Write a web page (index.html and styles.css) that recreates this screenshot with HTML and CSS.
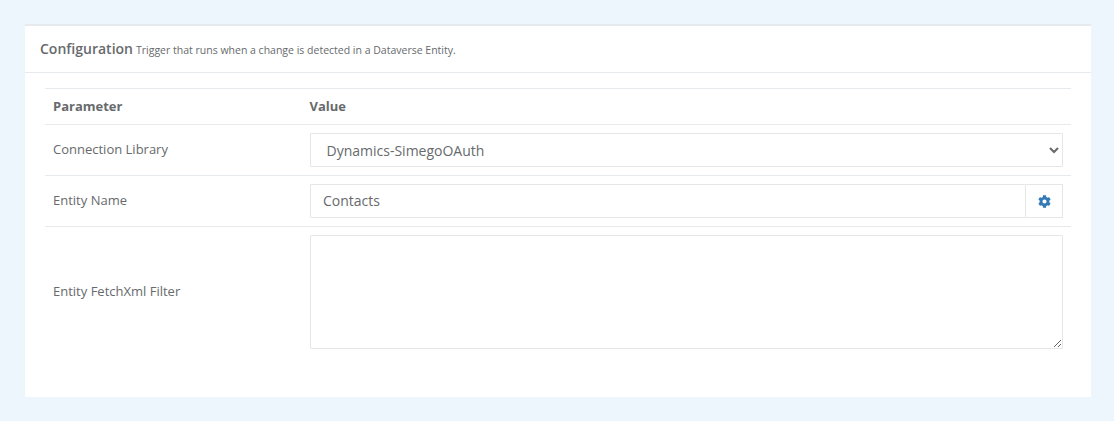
FILE: index.html
```html
<!DOCTYPE html>
<html lang="en">
<head>
<meta charset="utf-8">
<title>Configuration</title>
<link rel="stylesheet" href="styles.css">
</head>
<body>
<section class="card">
  <header class="card-header">
    <h3 class="card-title">Configuration</h3>
    <small class="card-sub">Trigger that runs when a change is detected in a Dataverse Entity.</small>
  </header>
  <div class="card-body">
    <table class="params">
      <thead>
        <tr><th class="col-name">Parameter</th><th class="col-value">Value</th></tr>
      </thead>
      <tbody>
        <tr>
          <td class="label">Connection Library</td>
          <td><select class="control select"><option>Dynamics-SimegoOAuth</option></select></td>
        </tr>
        <tr>
          <td class="label">Entity Name</td>
          <td>
            <div class="input-group">
              <input class="control group-input" type="text" value="Contacts">
              <button class="group-btn" type="button" aria-label="Settings">
                <svg class="gear" viewBox="0 0 512 512" width="13" height="13"><path fill="#337ab7" d="M487.4 315.7l-42.6-24.6c4.3-23.2 4.3-47 0-70.2l42.6-24.6c4.9-2.8 7.1-8.6 5.5-14-11.100-35.600-30-67.800-54.700-94.600-3.800-4.100-10-5.100-14.800-2.300L380.800 110c-17.900-15.400-38.500-27.300-60.800-35.100V25.800c0-5.600-3.900-10.500-9.400-11.700-36.700-8.200-74.300-7.800-109.200 0-5.500 1.200-9.400 6.100-9.400 11.700V75c-22.200 7.900-42.800 19.800-60.800 35.100L88.700 85.500c-4.900-2.800-11-1.900-14.800 2.300-24.700 26.700-43.600 58.900-54.700 94.600-1.700 5.400.6 11.200 5.500 14L67.300 221c-4.300 23.200-4.300 47 0 70.200l-42.600 24.600c-4.900 2.800-7.100 8.600-5.500 14 11.100 35.600 30 67.800 54.700 94.600 3.800 4.100 10 5.100 14.800 2.300l42.600-24.600c17.900 15.400 38.500 27.300 60.800 35.100v49.200c0 5.600 3.900 10.500 9.400 11.700 36.700 8.200 74.300 7.800 109.200 0 5.500-1.200 9.400-6.100 9.400-11.700v-49.200c22.200-7.900 42.800-19.800 60.800-35.100l42.600 24.600c4.900 2.800 11 1.900 14.800-2.300 24.700-26.700 43.600-58.900 54.700-94.600 1.500-5.500-.7-11.300-5.600-14.100zM256 336c-44.100 0-80-35.900-80-80s35.900-80 80-80 80 35.900 80 80-35.900 80-80 80z"/></svg>
              </button>
            </div>
          </td>
        </tr>
        <tr>
          <td class="label">Entity FetchXml Filter</td>
          <td><textarea class="control area"></textarea></td>
        </tr>
      </tbody>
    </table>
  </div>
</section>
</body>
</html>
```
FILE: styles.css
```css
* { box-sizing: border-box; }
html, body { height: 100%; }
body {
  margin: 0;
  padding: 24px 23px 24px 25px;
  background: #edf5fd;
  color: #676a6c;
  font-family: "Open Sans", sans-serif;
  font-size: 13px;
}
.card {
  background: #fff;
  border-top: 2px solid #e7eaec;
  height: 373px;
}
.card-header {
  display: flex;
  align-items: baseline;
  gap: 3px;
  height: 47px;
  padding: 13px 15px 0;
  border-bottom: 1px solid #e7eaec;
}
.card-title {
  margin: 0;
  font-size: 14px;
  font-weight: 600;
  line-height: 20px;
}
.card-sub { font-size: 10.5px; line-height: 20px; }
.card-body { padding: 15px 20px; }
.params {
  width: 100%;
  border-collapse: collapse;
  table-layout: fixed;
}
.params th, .params td {
  padding: 8px;
  border-top: 1px solid #e7eaec;
  text-align: left;
  vertical-align: middle;
  line-height: 19px;
}
.params th { font-weight: 700; }
.params .label { padding-top: 7px; padding-bottom: 9px; }
.col-name { width: 257px; }
.params .col-value { padding-left: 7.5px; }
.control {
  display: block;
  width: 100%;
  height: 34px;
  margin: 0;
  padding: 6px 12px;
  background: #fff;
  border: 1px solid #e5e6e7;
  border-radius: 1px;
  color: #676a6c;
  font: 14px "Open Sans", sans-serif;
}
.select { padding-left: 11.5px; }
.input-group { display: flex; }
.group-input { flex: 1; min-width: 0; padding-top: 5px; padding-bottom: 7px; }
.group-btn {
  display: flex;
  align-items: center;
  justify-content: center;
  width: 37px;
  height: 34px;
  padding: 0;
  background: #fff;
  border: 1px solid #e5e6e7;
  border-left: 0;
  border-radius: 0 1px 1px 0;
}
.area { height: 114px; resize: vertical; }
```
